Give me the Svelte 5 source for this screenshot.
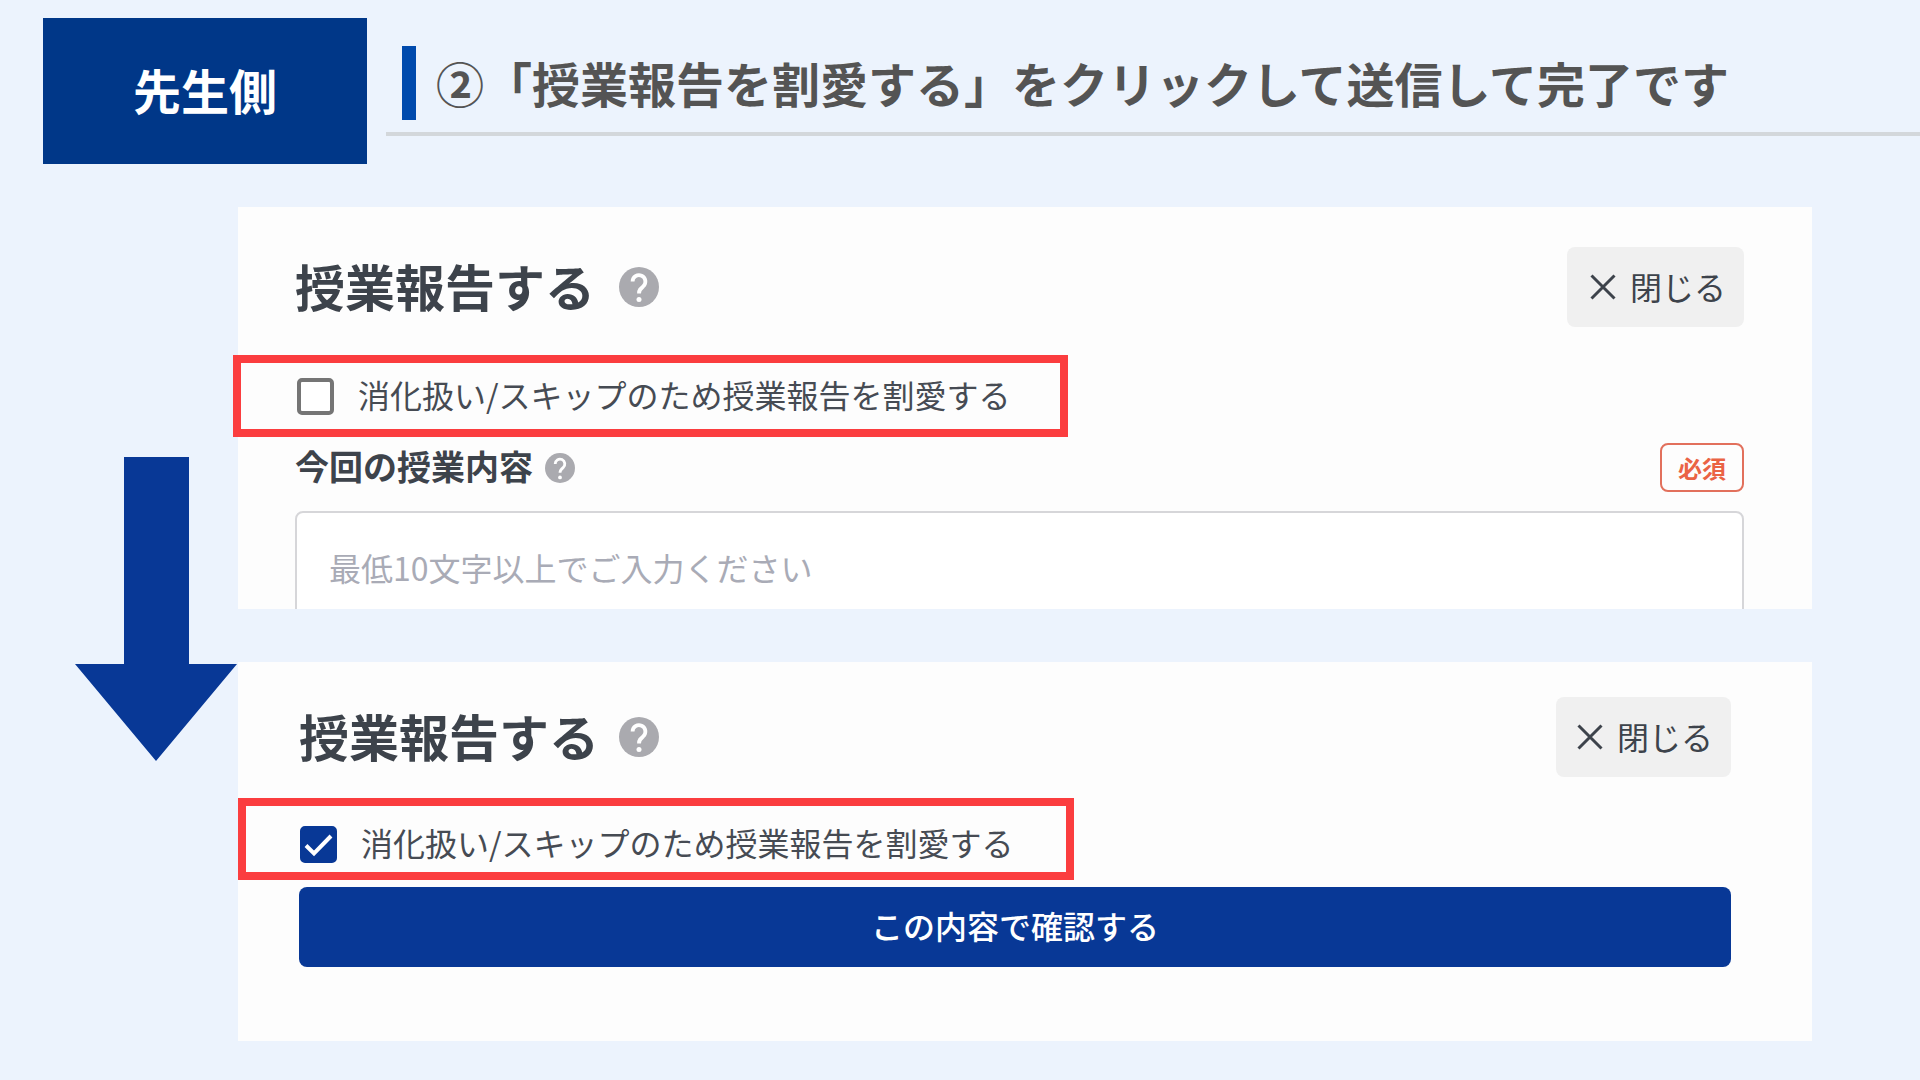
<script lang="ts">
	let skipBefore = $state(false);
	let skipAfter = $state(true);
	let content = $state('');
</script>

{#snippet helpIcon()}
	<svg viewBox="0 0 40 40" aria-hidden="true">
		<circle cx="20" cy="20" r="20" fill="#aaaaaf" />
		<path
			d="M13.6 14.6a6.4 6.4 0 1 1 10.6 4.8c-2.7 2.2-4.2 3.4-4.2 7"
			fill="none"
			stroke="#fff"
			stroke-width="3.8"
		/>
		<circle cx="20" cy="32.5" r="2.5" fill="#fff" />
	</svg>
{/snippet}

{#snippet panelHead()}
	<div class="panelHead">
		<h2>授業報告する</h2>
		<button class="help" type="button" aria-label="ヘルプ">{@render helpIcon()}</button>
		<button class="close" type="button">
			<svg viewBox="0 0 26 26" aria-hidden="true">
				<path d="M1.5 1.5l23 23M24.5 1.5l-23 23" fill="none" stroke="#3d434b" stroke-width="3" />
			</svg>
			<span>閉じる</span>
		</button>
	</div>
{/snippet}

{#snippet tick()}
	<svg viewBox="0 0 37 37" aria-hidden="true">
		<path d="M6 19.5l8 8L31 10" fill="none" stroke="#fff" stroke-width="4" />
	</svg>
{/snippet}

<main>
	<header>
		<div class="side">先生側</div>
		<div class="titleBar">
			<h1>②「授業報告を割愛する」をクリックして送信して完了です</h1>
		</div>
	</header>

	<div class="steps">
		<div class="flow">
			<svg viewBox="0 0 162 304" aria-hidden="true">
				<path d="M49 0h65v207h48L81 304 0 207h49z" fill="#083896" />
			</svg>
		</div>

		<div class="panels">
			<section class="panel before">
				{@render panelHead()}
				<label class="skip">
					<span class="box">
						<input type="checkbox" bind:checked={skipBefore} />
						{@render tick()}
					</span>
					<span class="skipText">消化扱い/スキップのため授業報告を割愛する</span>
				</label>
				<div class="fieldHead">
					<label for="content">今回の授業内容</label>
					<button class="help small" type="button" aria-label="ヘルプ">{@render helpIcon()}</button>
					<span class="required">必須</span>
				</div>
				<div class="fieldClip">
					<textarea id="content" placeholder="最低10文字以上でご入力ください" bind:value={content}></textarea>
				</div>
			</section>

			<section class="panel after">
				{@render panelHead()}
				<label class="skip">
					<span class="box">
						<input type="checkbox" bind:checked={skipAfter} />
						{@render tick()}
					</span>
					<span class="skipText">消化扱い/スキップのため授業報告を割愛する</span>
				</label>
				<button class="submit" type="button">この内容で確認する</button>
			</section>
		</div>
	</div>
</main>

<style>
	:global(body) {
		background: #ecf3fd;
	}

	main {
		font-family: 'Noto Sans CJK JP', sans-serif;
		color: #3d434b;
	}

	main * {
		box-sizing: border-box;
	}

	button,
	textarea {
		font-family: inherit;
	}

	button {
		border: none;
		cursor: pointer;
	}

	svg {
		display: block;
	}

	header {
		display: flex;
		align-items: flex-start;
		padding: 18px 0 0 43px;
	}

	.side {
		display: flex;
		align-items: center;
		justify-content: center;
		width: 324px;
		height: 146px;
		padding-bottom: 4px;
		background: #003788;
		color: #fff;
		font-size: 48px;
		font-weight: bold;
		line-height: 72px;
	}

	.titleBar {
		flex: 1;
		margin-left: 19px;
		padding: 28px 0 12px 16px;
		border-bottom: 4px solid #d3d7db;
	}

	h1 {
		margin: 0;
		padding: 0 0 2px 20px;
		border-left: 14px solid #004aad;
		color: #545454;
		font-size: 48px;
		line-height: 72px;
		white-space: nowrap;
	}

	.steps {
		display: flex;
		padding: 43px 108px 39px 0;
	}

	.flow {
		flex: 0 0 238px;
		padding: 250px 1px 0 75px;
	}

	.panels {
		flex: 1;
		display: flex;
		flex-direction: column;
		gap: 53px;
	}

	.panel {
		display: flex;
		flex-direction: column;
		background: #fdfdfd;
	}

	.before {
		padding: 40px 68px 0 57px;
	}

	.after {
		padding: 35px 81px 74px 61px;
	}

	.panelHead {
		display: flex;
		align-items: center;
	}

	h2 {
		margin: 0;
		padding-bottom: 4px;
		font-size: 50px;
		line-height: 72px;
	}

	.help {
		width: 40px;
		margin-left: 24px;
		padding: 0;
		background: none;
	}

	.after .help {
		margin-left: 20px;
	}

	.help.small {
		width: 30px;
		margin-left: 12px;
	}

	.close {
		display: flex;
		align-items: center;
		gap: 14px;
		height: 80px;
		margin-left: auto;
		padding: 0 18px 0 23px;
		border-radius: 8px;
		background: #f0f0f0;
		color: #3d434b;
		font-size: 32px;
	}

	.close span {
		padding-bottom: 3px;
	}

	.after .close {
		padding: 0 18px 0 21px;
	}

	.close svg {
		width: 26px;
	}

	.skip {
		display: flex;
		align-items: center;
		align-self: flex-start;
		gap: 24px;
		height: 82px;
		margin-left: -62px;
		padding: 0 49px 0 56px;
		border: 8px solid #fb3d3f;
		color: #464b53;
		font-size: 32px;
		white-space: nowrap;
		cursor: pointer;
	}

	.before .skip {
		margin-top: 28px;
	}

	.after .skip {
		margin: 21px 0 0 -61px;
		padding: 10px 52px 0 54px;
	}

	.skipText {
		padding-bottom: 4px;
	}

	.box {
		display: grid;
	}

	.box > :global(*) {
		grid-area: 1 / 1;
	}

	.box input {
		appearance: none;
		width: 37px;
		height: 37px;
		margin: 0;
		border: 4px solid #757575;
		border-radius: 5px;
		background: #fff;
	}

	.box input:checked {
		border-color: #083896;
		background: #083896;
	}

	.box svg {
		width: 37px;
		pointer-events: none;
	}

	.box input:not(:checked) + svg {
		visibility: hidden;
	}

	.fieldHead {
		display: flex;
		align-items: center;
		margin-top: 6px;
	}

	.fieldHead label {
		padding-bottom: 4px;
		font-size: 34px;
		font-weight: bold;
		line-height: 45px;
	}

	.required {
		margin-left: auto;
		padding: 0 16px;
		border: 2px solid #e2705c;
		border-radius: 8px;
		color: #ea6344;
		font-size: 24px;
		font-weight: bold;
		line-height: 45px;
	}

	/* only the top of the field shows */
	.fieldClip {
		height: 98px;
		margin-top: 19px;
		overflow: hidden;
	}

	textarea {
		display: block;
		width: 100%;
		height: 200px;
		padding: 30px 32px;
		border: 2px solid #d6d6d9;
		border-radius: 8px;
		background: #fff;
		color: #3d434b;
		font-size: 32px;
		line-height: 48px;
		resize: none;
	}

	textarea::placeholder {
		color: #a9abb6;
	}

	.submit {
		height: 80px;
		margin-top: 7px;
		padding: 0 0 4px;
		border-radius: 8px;
		background: #083896;
		color: #fff;
		font-size: 32px;
		font-weight: 500;
	}
</style>
